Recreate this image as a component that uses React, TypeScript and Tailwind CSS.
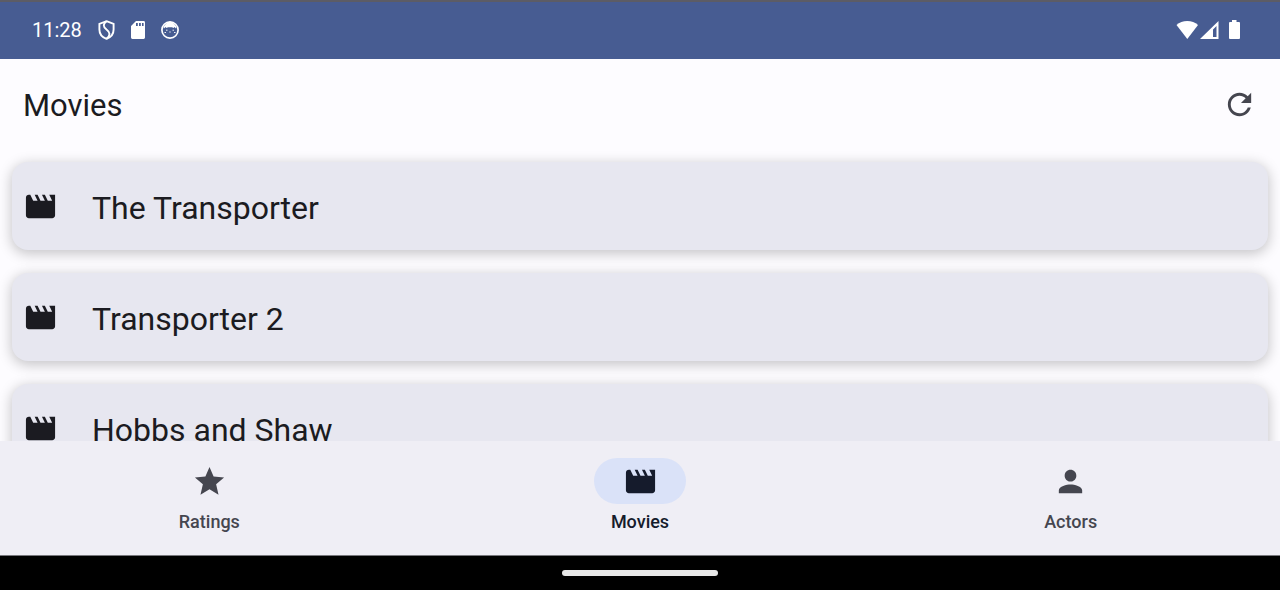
import React from "react";

const PATHS = {
  movie:
    "M18 4l2 4h-3l-2-4h-2l2 4h-3l-2-4H8l2 4H7L5 4H4c-1.1 0-1.99.9-1.99 2L2 18c0 1.1.9 2 2 2h16c1.1 0 2-.9 2-2V4h-4z",
  star: "M12 17.27L18.18 21l-1.64-7.03L22 9.24l-7.19-.61L12 2 9.19 8.63 2 9.24l5.46 4.73L5.82 21z",
  person:
    "M12 12c2.21 0 4-1.79 4-4s-1.79-4-4-4-4 1.79-4 4 1.79 4 4 4zm0 2c-2.67 0-8 1.34-8 4v2h16v-2c0-2.66-5.33-4-8-4z",
  refresh:
    "M17.65 6.35C16.2 4.9 14.21 4 12 4c-4.42 0-7.99 3.58-7.99 8s3.57 8 7.99 8c3.73 0 6.84-2.55 7.73-6h-2.08c-.82 2.33-3.04 4-5.65 4-3.31 0-6-2.69-6-6s2.69-6 6-6c1.66 0 3.14.69 4.22 1.78L13 11h7V4l-2.35 2.35z",
};

type IconName = keyof typeof PATHS;

function Icon({ name }: { name: IconName }) {
  return (
    <svg viewBox="0 0 24 24" className="size-[35px] shrink-0" fill="currentColor" aria-hidden="true">
      <path d={PATHS[name]} />
    </svg>
  );
}

function StatusBar() {
  return (
    <div className="flex h-[59px] shrink-0 items-center justify-between border-t-2 border-[#5c5c66] bg-[#475c92] pr-10 pb-0.5 pl-8 text-white">
      <div className="flex items-center gap-4">
        <span className="text-xl">11:28</span>
        <svg viewBox="0 0 17 20" className="h-5 w-[17px]" fill="none" stroke="currentColor" strokeWidth="1.9" aria-hidden="true">
          <path d="M8.5 1.2 15.6 3.8V9.5C15.6 13.8 12.6 17.4 8.5 18.8 4.4 17.400 1.4 13.8 1.4 9.5V3.8Z" />
          <path d="M8.5 1.2C5 4 4.800 6.500 8.500 9.500 12.500 12.500 12.500 15.500 8.500 18.800" />
        </svg>
        <svg viewBox="0 0 14 18" className="h-[18px] w-3.5" fill="currentColor" aria-hidden="true">
          <path fillRule="evenodd" d="M5 0H12.6Q14 0 14 1.4V16.6Q14 18 12.6 18H1.4Q0 18 0 16.6V5ZM5 2V5H6.8V2ZM8 2V5H9.8V2ZM11 2V5H12.6V2Z" />
        </svg>
        <svg viewBox="0 0 18 18" className="size-[18px]" aria-hidden="true">
          <circle cx="9" cy="9" r="8.1" fill="none" stroke="currentColor" strokeWidth="1.7" />
          <path
            d="M2.500 6C4 3 6.500 1 9 1S14 3 15.500 6L15 7.500 13.500 6 12.500 7 11 6.200H7L5.500 7 4.500 6 3 7.500Z"
            fill="currentColor"
          />
          <path d="M5 9.200H6.500M11.500 9.200H13M3.500 11.500H5M13 11.500H14.500M8.300 11H9.700" stroke="currentColor" strokeWidth="0.9" />
        </svg>
      </div>
      <svg viewBox="0 0 64 20" className="h-5 w-16" fill="currentColor" aria-hidden="true">
        <path d="M.5 5C6 -.5 16.500 -.5 22 5L11.300 19Z" />
        <path fillRule="evenodd" d="M42.500 1V19H24ZM40.500 6 37 9.500V17H40.500Z" />
        <path d="M56 0H60.500V2H63Q64 2 64 3V18Q64 19 63 19H54Q53 19 53 18V3Q53 2 54 2H56Z" />
      </svg>
    </div>
  );
}

const MOVIES = ["The Transporter", "Transporter 2", "Hobbs and Shaw"];

function MovieCard({ title }: { title: string }) {
  return (
    <li className="flex h-[88px] shrink-0 items-center gap-[34px] rounded-2xl bg-[#e7e7f0] px-[11px] text-[#1b1b21] shadow-[0_3px_13px_1px_rgba(0,0,0,0.22)]">
      <Icon name="movie" />
      <span className="pt-1 text-[32px] leading-10">{title}</span>
    </li>
  );
}

const TABS: { label: string; icon: IconName; active?: boolean }[] = [
  { label: "Ratings", icon: "star" },
  { label: "Movies", icon: "movie", active: true },
  { label: "Actors", icon: "person" },
];

function NavBar() {
  return (
    <nav className="flex h-[114px] shrink-0 gap-3 bg-[#efeef5] pt-[17px]">
      {TABS.map((tab) => (
        <button
          key={tab.label}
          type="button"
          aria-current={tab.active ? "page" : undefined}
          className={
            tab.active
              ? "flex flex-1 flex-col items-center gap-1.5 text-[#151b2c]"
              : "flex flex-1 flex-col items-center gap-1.5 text-[#45464f]"
          }
        >
          <span
            className={
              tab.active
                ? "flex h-[46px] w-[92px] items-center justify-center rounded-full bg-[#dae2f8]"
                : "flex h-[46px] w-[92px] items-center justify-center rounded-full"
            }
          >
            <Icon name={tab.icon} />
          </span>
          <span className="text-lg leading-6 font-medium">{tab.label}</span>
        </button>
      ))}
    </nav>
  );
}

export default function App() {
  return (
    <div className="flex h-screen flex-col overflow-hidden bg-[#fdfcff] font-['Roboto',sans-serif]">
      <StatusBar />
      <header className="flex h-[91px] shrink-0 items-center justify-between px-[23px] text-[#1b1b21]">
        <h1 className="pt-0.5 text-[31px] leading-10">Movies</h1>
        <button type="button" aria-label="Refresh" className="text-[#45464f]">
          <Icon name="refresh" />
        </button>
      </header>
      <main className="min-h-0 flex-1 overflow-y-auto [scrollbar-width:none]">
        <ul className="flex flex-col gap-[23px] px-3 py-3">
          {MOVIES.map((title) => (
            <MovieCard key={title} title={title} />
          ))}
        </ul>
      </main>
      <NavBar />
      <div className="flex h-[35px] shrink-0 items-center justify-center border-t border-[#77777c] bg-black">
        <div className="h-1.5 w-[156px] rounded-full bg-[#e8e8e8]" />
      </div>
    </div>
  );
}
